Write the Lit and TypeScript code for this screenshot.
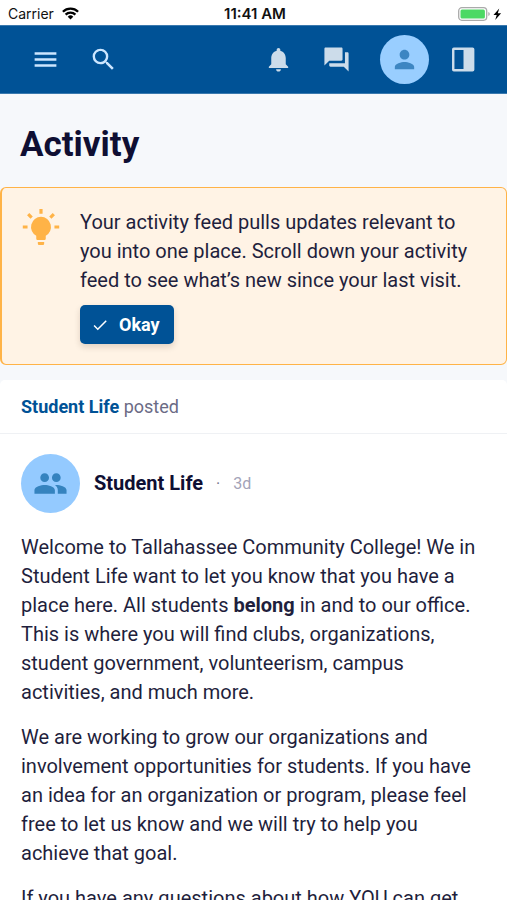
import { LitElement, html, svg, css } from "lit";
import { customElement, property } from "lit/decorators.js";

const icons: Record<string, unknown> = {
  menu: svg`<path d="M3 18h18v-2H3v2zm0-5h18v-2H3v2zm0-7v2h18V6H3z"/>`,
  search: svg`<path d="M15.5 14h-.79l-.28-.27A6.471 6.471 0 0 0 16 9.5 6.5 6.5 0 1 0 9.5 16c1.61 0 3.09-.59 4.23-1.57l.27.28v.79l5 4.99L20.49 19l-4.99-5zm-6 0C7.01 14 5 11.99 5 9.5S7.01 5 9.5 5 14 7.01 14 9.5 11.99 14 9.5 14z"/>`,
  bell: svg`<path d="M12 22c1.1 0 2-.9 2-2h-4c0 1.1.89 2 2 2zm6-6v-5c0-3.07-1.64-5.64-4.5-6.32V4c0-.83-.67-1.5-1.5-1.5s-1.5.67-1.5 1.5v.68C7.63 5.36 6 7.92 6 11v5l-2 2v1h16v-1l-2-2z"/>`,
  chat: svg`<path d="M21 6h-2v9H6v2c0 .55.45 1 1 1h11l4 4V7c0-.55-.45-1-1-1zm-4 6V3c0-.55-.45-1-1-1H3c-.55 0-1 .45-1 1v14l4-4h10c.55 0 1-.45 1-1z"/>`,
  person: svg`<path d="M12 12c2.21 0 4-1.79 4-4s-1.79-4-4-4-4 1.79-4 4 1.79 4 4 4zm0 2c-2.67 0-8 1.34-8 4v2h16v-2c0-2.66-5.33-4-8-4z"/>`,
  people: svg`<path d="M16 11c1.66 0 2.99-1.34 2.99-3S17.66 5 16 5s-3 1.34-3 3 1.34 3 3 3zm-8 0c1.66 0 2.99-1.34 2.99-3S9.66 5 8 5 5 6.34 5 8s1.34 3 3 3zm0 2c-2.33 0-7 1.17-7 3.5V19h14v-2.5C15 14.17 10.33 13 8 13zm8 0c-.29 0-.62.02-.97.05 1.16.84 1.97 1.97 1.97 3.45V19h6v-2.5c0-2.33-4.67-3.5-7-3.5z"/>`,
  panel: svg`<path fill-rule="evenodd" d="M4 2h15.500A1.500 1.500 0 0 1 21 3.500v17a1.500 1.500 0 0 1-1.500 1.500H4a1.500 1.500 0 0 1-1.500-1.500v-17A1.500 1.500 0 0 1 4 2zM4.500 4.200v15.600h7.500V4.200z"/>`,
  check: svg`<path d="M9 16.170 4.830 12l-1.420 1.410L9 19 21 7l-1.410-1.410z"/>`,
  bulb: svg`<path d="M12 5.600a6.400 6.400 0 0 1 3 12v1.600c0 .6-.4 1-1 1h-4c-.6 0-1-.4-1-1v-1.600a6.400 6.400 0 0 1 3-12zM10 21.400h4v1c0 .6-.4 1-1 1h-2c-.6 0-1-.4-1-1z"/><path fill="none" stroke="currentColor" stroke-width="2" d="M12 .6v3M.5 12h3M20.500 12h3M3.900 3.900l2.200 2.200M20.100 3.900l-2.200 2.200"/>`,
};

@customElement("app-icon")
export class AppIcon extends LitElement {
  @property() name = "menu";
  static styles = css`
    :host { display: block; width: 29px; height: 29px; flex: none; }
    svg { display: block; width: 100%; height: 100%; fill: currentColor; }
  `;
  render() {
    return html`<svg viewBox="0 0 24 24" aria-hidden="true">${icons[this.name]}</svg>`;
  }
}

@customElement("status-bar")
export class StatusBar extends LitElement {
  static styles = css`
    :host {
      display: grid; grid-template-columns: 1fr auto 1fr; align-items: center;
      height: 25px; padding: 2px 5px 0 8px; box-sizing: border-box;
      font: 14px/16px Inter, sans-serif; color: #111; background: #fff;
    }
    .left { display: flex; align-items: center; gap: 8px; }
    .time { font-weight: 600; font-size: 15px; }
    .right { display: flex; justify-content: flex-end; }
    svg { display: block; }
  `;
  render() {
    return html`
      <div class="left">
        <span>Carrier</span>
        <svg width="17" height="13" viewBox="0 0 17 13" fill="none" stroke="#000" stroke-width="2.300">
          <path d="M.9 4.700a10.900 10.900 0 0 1 15.200 0M3.600 7.600a7 7 0 0 1 9.800 0"/>
          <path fill="#000" stroke="none" d="M8.500 12.600 5.700 9.700a4 4 0 0 1 5.600 0z"/>
        </svg>
      </div>
      <div class="time">11:41 AM</div>
      <div class="right">
        <svg width="44" height="14" viewBox="0 0 44 14">
          <rect x=".7" y=".7" width="28" height="12.600" rx="3.200" fill="#fff" stroke="#aaa" stroke-width="1.300"/>
          <rect x="2.500" y="2.500" width="24.400" height="9" rx="1.500" fill="#4cd964"/>
          <path d="M30.300 5v4q1.500-.6 1.500-2t-1.500-2z" fill="#aaa"/>
          <path d="M41.200 1.500 35.500 8h3.200l-1.500 5 5.900-6.800h-3.300z" fill="#000"/>
        </svg>
      </div>
    `;
  }
}

@customElement("app-bar")
export class AppBar extends LitElement {
  static styles = css`
    :host {
      display: flex; align-items: center; height: 69px; box-sizing: border-box;
      padding: 0 15px 0 16px; background: #005296;
      border-top: 1px solid #3a79ae; border-bottom: 1px solid #3a79ae;
    }
    button { border: 0; margin: 0; background: none; cursor: pointer; color: #ccdcea; }
    .tool { padding: 15px 14px; width: 58px; display: grid; place-items: center; }
    .light { color: #cce6ff; }
    .spacer { flex: 1; }
    .avatar {
      display: grid; place-items: center; width: 49px; height: 49px; padding: 0;
      margin: 0 5px 0 15px; border-radius: 50%; background: #99ceff; color: #3d86c2;
    }
  `;
  render() {
    return html`
      <button class="tool light" aria-label="Menu"><app-icon name="menu"></app-icon></button>
      <button class="tool light" aria-label="Search"><app-icon name="search"></app-icon></button>
      <span class="spacer"></span>
      <button class="tool" aria-label="Notifications"><app-icon name="bell"></app-icon></button>
      <button class="tool" aria-label="Messages"><app-icon name="chat"></app-icon></button>
      <button class="avatar" aria-label="Profile"><app-icon name="person"></app-icon></button>
      <button class="tool" aria-label="Side panel"><app-icon name="panel"></app-icon></button>
    `;
  }
}

@customElement("app-root")
export class AppRoot extends LitElement {
  static styles = css`
    :host {
      display: flex; flex-direction: column; height: 100vh;
      font: 20px/29px Roboto, sans-serif; color: #1f1f3d; background: #f6f8fb;
    }
    status-bar, app-bar { flex: none; }
    main { flex: 1; min-height: 0; overflow-y: auto; scrollbar-width: none; }
    h1 {
      margin: 0; padding: 29px 20px 20px; font-size: 35px; line-height: 44px;
      font-weight: 700; color: #0f0f33;
    }
    p { margin: 0; }
    .notice {
      display: flex; gap: 20px; padding: 20px 24px 20px 20px;
      border: 1px solid #ffb347; border-left-width: 2px; border-radius: 6px;
      background: #fff3e5;
    }
    .bulb { width: 38px; height: 38px; color: #ffb347; }
    .okay {
      display: flex; align-items: center; gap: 10px; height: 39px; margin-top: 10px;
      padding: 0 14px 0 11px; border: 0; border-radius: 5px; background: #005296;
      color: #fff; font: 700 18px/24px Roboto, sans-serif; cursor: pointer;
      box-shadow: 0 3px 6px rgba(60, 40, 20, 0.16);
    }
    .tick { width: 18px; height: 18px; }
    .post { margin-top: 15px; background: #fff; border-radius: 5px; }
    .origin {
      padding: 12px 21px; border-bottom: 1px solid #eff1f4;
      font-size: 18px; color: #6b6b85;
    }
    .origin a { color: #005296; font-weight: 700; text-decoration: none; }
    .author { display: flex; align-items: center; padding: 20px 21px; }
    .group {
      display: grid; place-items: center; width: 59px; height: 59px;
      margin-right: 14px; border-radius: 50%; background: #94caff; color: #3583bf;
    }
    .people { width: 35px; height: 35px; }
    .name { margin: 0; font-size: 20px; font-weight: 700; color: #0f0f33; }
    .dot { width: 30px; text-align: center; font-size: 16px; color: #77778f; }
    time { font-size: 16px; color: #a3a3b8; }
    .body { display: grid; gap: 16px; padding: 0 21px 20px; }
  `;
  render() {
    return html`
      <status-bar></status-bar>
      <app-bar></app-bar>
      <main>
        <h1>Activity</h1>
        <section class="notice">
          <app-icon class="bulb" name="bulb"></app-icon>
          <div>
            <p>Your activity feed pulls updates relevant to you into one place. Scroll down your activity feed to see what’s new since your last visit.</p>
            <button class="okay"><app-icon class="tick" name="check"></app-icon>Okay</button>
          </div>
        </section>
        <article class="post">
          <div class="origin"><a href="#student-life">Student Life</a> posted</div>
          <header class="author">
            <div class="group"><app-icon class="people" name="people"></app-icon></div>
            <h2 class="name">Student Life</h2>
            <span class="dot">·</span>
            <time>3d</time>
          </header>
          <div class="body">
            <p>Welcome to Tallahassee Community College! We in Student Life want to let you know that you have a place here. All students <b>belong</b> in and to our office. This is where you will find clubs, organizations, student government, volunteerism, campus activities, and much more.</p>
            <p>We are working to grow our organizations and involvement opportunities for students. If you have an idea for an organization or program, please feel free to let us know and we will try to help you achieve that goal.</p>
            <p>If you have any questions about how YOU can get</p>
          </div>
        </article>
      </main>
    `;
  }
}
